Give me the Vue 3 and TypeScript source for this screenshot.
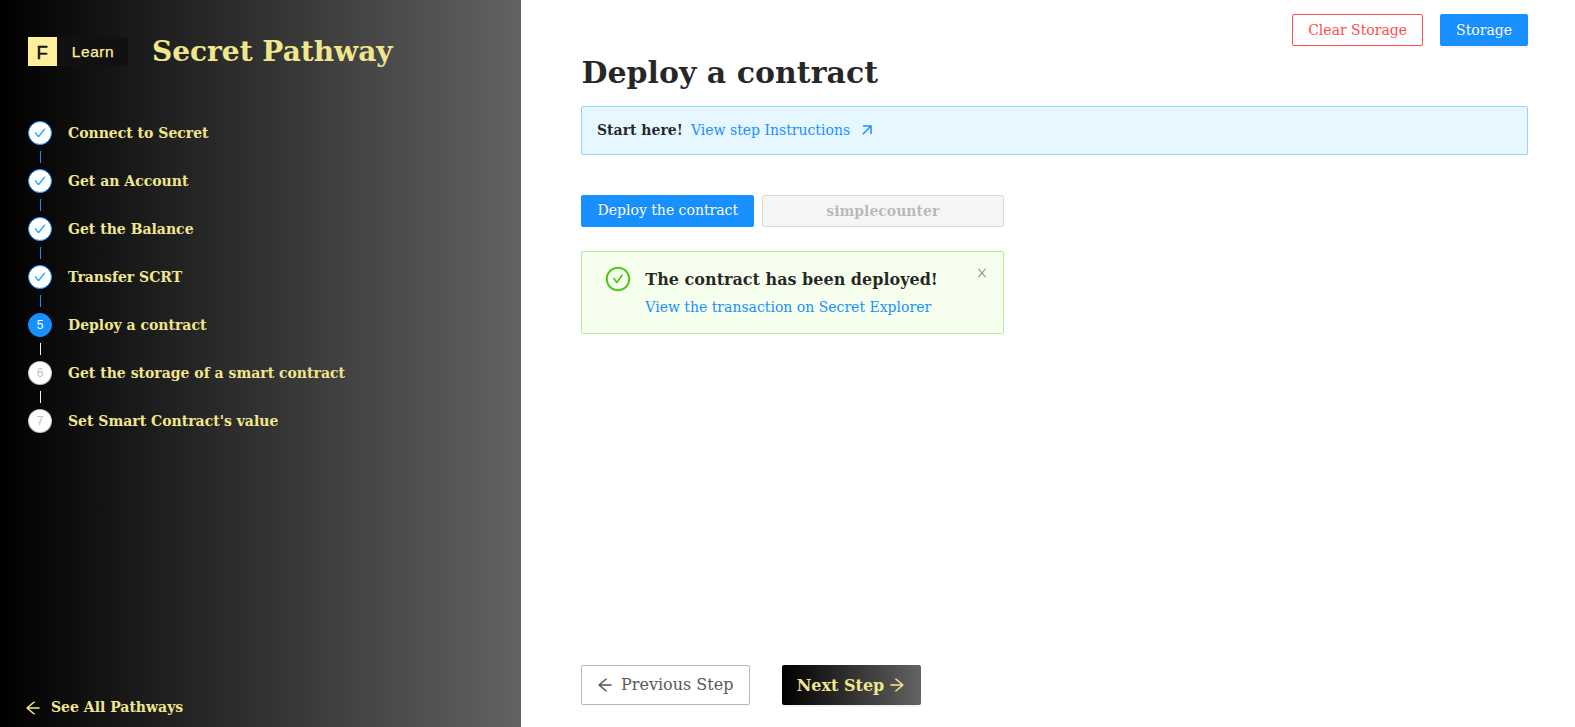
<script setup lang="ts">
interface Step {
  title: string
  status: 'finish' | 'process' | 'wait'
}

const steps: Step[] = [
  { title: 'Connect to Secret', status: 'finish' },
  { title: 'Get an Account', status: 'finish' },
  { title: 'Get the Balance', status: 'finish' },
  { title: 'Transfer SCRT', status: 'finish' },
  { title: 'Deploy a contract', status: 'process' },
  { title: 'Get the storage of a smart contract', status: 'wait' },
  { title: "Set Smart Contract's value", status: 'wait' },
]

const icons = {
  check:
    'M912 190h-69.9c-9.8 0-19.1 4.5-25.1 12.2L404.7 724.5 207 474a32 32 0 00-25.1-12.2H112c-6.7 0-10.4 7.7-6.3 12.9l273.9 347c12.8 16.2 37.4 16.2 50.3 0l488.4-618.9c4.1-5.1.4-12.8-6.3-12.8z',
  left:
    'M872 474H286.9l350.2-304c5.6-4.9 2.2-14-5.2-14h-88.5c-3.9 0-7.6 1.4-10.5 3.9L155 487.8a31.96 31.96 0 000 48.3L535.1 866c1.5 1.3 3.3 2 5.2 2h91.5c7.4 0 10.8-9.2 5.2-14L286.9 550H872c4.4 0 8-3.6 8-8v-60c0-4.4-3.6-8-8-8z',
  right:
    'M869 487.8L491.2 159.9c-2.9-2.5-6.6-3.9-10.5-3.9h-88.5c-7.4 0-10.8 9.2-5.2 14l350.2 304H152c-4.4 0-8 3.6-8 8v60c0 4.4 3.6 8 8 8h585.1L386.9 854c-5.6 4.9-2.2 14 5.2 14h91.5c1.9 0 3.8-.7 5.2-2L869 536.2a32.07 32.07 0 000-48.4z',
  close:
    'M563.8 512l262.5-312.9c4.4-5.2.7-13.1-6.1-13.1h-79.8c-4.7 0-9.2 2.1-12.3 5.7L511.6 449.8 295.1 191.7c-3-3.6-7.5-5.7-12.3-5.7H203c-6.8 0-10.5 7.9-6.1 13.1L459.4 512 196.9 824.9A7.95 7.95 0 00203 838h79.8c4.7 0 9.2-2.1 12.3-5.7l216.5-258.1 216.5 258.1c3 3.6 7.5 5.7 12.3 5.7h79.8c6.8 0 10.5-7.9 6.1-13.1L563.8 512z',
  tick:
    'M699 353h-46.9c-10.2 0-19.9 4.9-25.9 13.3L469 584.3l-71.2-98.8c-6-8.3-15.6-13.3-25.9-13.3H325c-6.5 0-10.3 7.4-6.5 12.7l124.6 172.8a31.8 31.8 0 0051.7 0l210.6-292c3.9-5.3.1-12.7-6.4-12.7z',
  ring:
    'M512 64C264.6 64 64 264.6 64 512s200.6 448 448 448 448-200.6 448-448S759.4 64 512 64zm0 820c-205.4 0-372-166.6-372-372s166.6-372 372-372 372 166.6 372 372-166.6 372-372 372z',
}
</script>

<template>
  <div class="layout">
    <aside class="sidebar">
      <header class="brand">
        <div class="logo">
          <span class="logo-mark">F</span>
          <span class="logo-text">Learn</span>
        </div>
        <div class="brand-title">Secret Pathway</div>
      </header>
      <ol class="steps">
        <li v-for="(step, i) in steps" :key="step.title" class="step" :class="step.status">
          <div class="rail">
            <span class="dot">
              <svg v-if="step.status === 'finish'" viewBox="64 64 896 896" width="12" height="12"><path :d="icons.check" /></svg>
              <template v-else>{{ i + 1 }}</template>
            </span>
            <i v-if="i < steps.length - 1" class="tail"></i>
          </div>
          <span class="step-title">{{ step.title }}</span>
        </li>
      </ol>
      <a class="all">
        <svg class="arrow" viewBox="64 64 896 896" width="16" height="16"><path :d="icons.left" /></svg>
        <span>See All Pathways</span>
      </a>
    </aside>

    <main class="main">
      <div class="topbar">
        <button class="btn danger">Clear Storage</button>
        <button class="btn primary">Storage</button>
      </div>
      <h1>Deploy a contract</h1>
      <div class="info">
        <strong>Start here!</strong>
        <a>View step Instructions</a>
        <svg class="ext" viewBox="0 0 10 10" width="10" height="10"><path d="M1 1H9V9M9 1L.8 9.2" /></svg>
      </div>
      <div class="action">
        <button class="btn primary deploy">Deploy the contract</button>
        <div class="field">simplecounter</div>
      </div>
      <div class="success">
        <svg class="ok" viewBox="0 0 1024 1024" width="28" height="28"><path :d="icons.tick" /><path :d="icons.ring" /></svg>
        <div class="success-body">
          <strong>The contract has been deployed!</strong>
          <a>View the transaction on Secret Explorer</a>
        </div>
        <svg class="close" viewBox="64 64 896 896" width="12" height="12"><path :d="icons.close" /></svg>
      </div>
      <footer class="nav">
        <button class="btn prev">
          <svg class="arrow" viewBox="64 64 896 896" width="16" height="16"><path :d="icons.left" /></svg>
          <span>Previous Step</span>
        </button>
        <button class="btn next">
          <span>Next Step</span>
          <svg class="arrow" viewBox="64 64 896 896" width="16" height="16"><path :d="icons.right" /></svg>
        </button>
      </footer>
    </main>
  </div>
</template>

<style>
body {
  margin: 0;
  background: #fff;
}
</style>

<style scoped>
.layout {
  display: flex;
  height: 727px;
  overflow: hidden;
  font: 14px/22px 'DejaVu Serif', serif;
  color: rgba(0, 0, 0, 0.85);
}
.layout * {
  box-sizing: border-box;
}
svg {
  display: block;
  flex: none;
  fill: currentColor;
}
.arrow {
  overflow: visible;
  stroke: currentColor;
  stroke-width: 8;
}
.sidebar {
  width: 521px;
  flex: none;
  display: flex;
  flex-direction: column;
  padding: 29px 28px 9px;
  color: #f0e68c;
  background: linear-gradient(to right, #000, #636363);
}
.brand {
  display: flex;
  align-items: center;
  gap: 24.5px;
  height: 44px;
}
.logo {
  display: flex;
  width: 99.5px;
  height: 29px;
  background: #111;
  font-family: 'Liberation Sans', sans-serif;
}
.logo-mark {
  width: 28.5px;
  background: #fff09a;
  color: #111;
  font-size: 18.5px;
  line-height: 31px;
  text-align: center;
  -webkit-text-stroke: 0.5px #111;
}
.logo-text {
  flex: 1;
  padding-left: 15.2px;
  color: #fff09a;
  font-size: 15.5px;
  letter-spacing: 0.6px;
  line-height: 29px;
  -webkit-text-stroke: 0.25px #fff09a;
}
.brand-title {
  padding-top: 2px;
  font-size: 28px;
  line-height: 44px;
  font-weight: 700;
  white-space: nowrap;
}
.steps {
  list-style: none;
  margin: 48px 0 0;
  padding: 0;
}
.step {
  display: flex;
  gap: 16px;
  height: 48px;
}
.rail {
  width: 24px;
  display: flex;
  flex-direction: column;
  align-items: center;
}
.dot {
  display: flex;
  align-items: center;
  justify-content: center;
  width: 24px;
  height: 24px;
  border: 1px solid #1890ff;
  border-radius: 50%;
  background: #fff;
  color: #1890ff;
  font: 12px/24px 'Liberation Sans', sans-serif;
}
.process .dot {
  background: #1890ff;
  color: #fff;
}
.wait .dot {
  border-color: rgba(0, 0, 0, 0.25);
  color: #bfbfbf;
}
.tail {
  width: 1px;
  height: 12px;
  margin: 6px 0 0 1px;
  background: #f0f0f0;
}
.finish .tail {
  background: #1890ff;
}
.step-title {
  font-weight: 700;
  line-height: 24px;
}
.all {
  display: flex;
  align-items: center;
  gap: 10px;
  margin: auto 0 0 -3px;
  font-weight: 700;
}
.all svg {
  margin-top: 1px;
}
.main {
  flex: 1;
  display: flex;
  flex-direction: column;
  padding: 14px 47px 22px 60px;
}
.topbar {
  display: flex;
  justify-content: flex-end;
  gap: 17px;
}
.btn {
  display: flex;
  align-items: center;
  justify-content: center;
  height: 32px;
  padding: 0 15px;
  border: 1px solid #d9d9d9;
  border-radius: 2px;
  background: #fff;
  font: inherit;
  white-space: nowrap;
  box-shadow: 0 2px 0 rgba(0, 0, 0, 0.016);
}
.primary {
  border-color: #1890ff;
  background: #1890ff;
  color: #fff;
  text-shadow: 0 -1px 0 rgba(0, 0, 0, 0.12);
  box-shadow: 0 2px 0 rgba(0, 0, 0, 0.045);
}
.deploy {
  padding: 0 14.5px 2px 15.5px;
  box-shadow: none;
}
.danger {
  border-color: #ff4d4f;
  color: #ff4d4f;
}
h1 {
  margin: 8px 0 15px 0.5px;
  font-size: 30px;
  line-height: 37px;
  font-weight: 700;
}
.info {
  display: flex;
  align-items: flex-start;
  height: 49px;
  padding: 12px 15px;
  border: 1px solid #91d5ff;
  border-radius: 2px;
  background: #e6f7ff;
}
.info a {
  margin-left: 8px;
}
a {
  color: #1890ff;
}
a.all {
  color: #f0e68c;
}
.ext {
  margin: 6px 0 0 12px;
  fill: none;
  stroke: #1890ff;
  stroke-width: 1.5;
}
.action {
  display: flex;
  gap: 8px;
  width: 423px;
  height: 32px;
  margin: 40px 0 24px;
}
.field {
  flex: 1;
  border: 1px solid #d9d9d9;
  border-radius: 2px;
  background: #f5f5f5;
  color: rgba(0, 0, 0, 0.25);
  font-weight: 700;
  line-height: 31px;
  text-align: center;
}
.success {
  display: flex;
  width: 423px;
  height: 83px;
  padding: 13px 15px 0 22px;
  border: 1px solid #b7eb8f;
  border-radius: 2px;
  background: #f6ffed;
}
.ok {
  color: #52c41a;
}
.success-body {
  display: flex;
  flex: 1;
  flex-direction: column;
  margin-left: 13.3px;
  white-space: nowrap;
}
.success-body strong {
  padding-top: 1px;
  font-size: 16px;
  line-height: 28px;
}
.success-body a {
  margin-top: -1px;
  line-height: 28px;
}
.close {
  margin-top: 2px;
  color: rgba(0, 0, 0, 0.45);
}
.nav {
  display: flex;
  gap: 32px;
  margin-top: auto;
}
.nav .btn {
  height: 40px;
  font-size: 16px;
}
.prev {
  width: 169px;
  padding: 0 0 0 15px;
  justify-content: flex-start;
  gap: 8px;
  border-color: #b8b8b8;
  color: #595959;
}
.prev svg {
  margin-top: -1px;
}
.next {
  gap: 5px;
  padding: 0 15.5px 0 14.5px;
  border: 0;
  background: linear-gradient(to right, #000, #636363);
  color: #f0e68c;
  box-shadow: 0 2px 0 rgba(0, 0, 0, 0.045);
}
.nav .next {
  width: 139px;
  font-weight: 700;
}
.next span {
  padding-top: 2px;
}
</style>
